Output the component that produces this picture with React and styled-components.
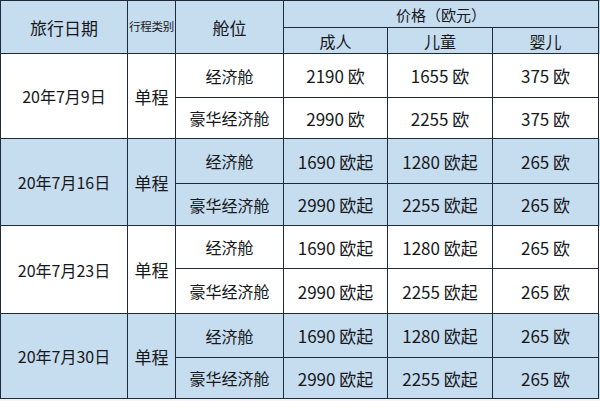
import React from 'react';
import styled, { createGlobalStyle } from 'styled-components';

const GlobalStyle = createGlobalStyle`
  html, body {
    margin: 0;
    padding: 0;
    background: #f4f5f6;
    overflow: hidden;
  }
  body {
    font-family: "Noto Sans CJK SC", "Noto Sans", sans-serif;
    color: #16181b;
  }
`;

const Table = styled.table`
  border-collapse: collapse;
  table-layout: fixed;
  width: 600px;
  border-top: 1px solid #9aa4ae;
  border-left: 1px solid #9aa4ae;
`;

const Cell = styled.td`
  border: 1.5px solid #1f2b39;
  background: ${(p) => (p.$shade ? '#c6dcef' : '#ffffff')};
  text-align: center;
  vertical-align: middle;
  padding: 0;
  font-size: ${(p) => p.$size || 16}px;
  font-weight: 400;
  line-height: 1;
  white-space: nowrap;
  overflow: hidden;
  letter-spacing: ${(p) => (p.$tight ? '-0.3px' : '0')};
`;

const Edge = styled.td`
  border: none;
  border-left: 1.5px solid #1f2b39;
  background: ${(p) => (p.$shade ? '#c6dcef' : '#ffffff')};
  padding: 0;
`;

const Row = styled.tr`
  height: ${(p) => p.$h}px;
`;

const groups = [
  {
    date: '20年7月9日',
    shade: false,
    rows: [
      ['经济舱', '2190 欧', '1655 欧', '375 欧'],
      ['豪华经济舱', '2990 欧', '2255 欧', '375 欧'],
    ],
    h: [44, 41],
  },
  {
    date: '20年7月16日',
    shade: true,
    rows: [
      ['经济舱', '1690 欧起', '1280 欧起', '265 欧'],
      ['豪华经济舱', '2990 欧起', '2255 欧起', '265 欧'],
    ],
    h: [45, 42],
  },
  {
    date: '20年7月23日',
    shade: false,
    rows: [
      ['经济舱', '1690 欧起', '1280 欧起', '265 欧'],
      ['豪华经济舱', '2990 欧起', '2255 欧起', '265 欧'],
    ],
    h: [43, 45],
  },
  {
    date: '20年7月30日',
    shade: true,
    rows: [
      ['经济舱', '1690 欧起', '1280 欧起', '265 欧'],
      ['豪华经济舱', '2990 欧起', '2255 欧起', '265 欧'],
    ],
    h: [44, 41],
  },
];

const App = () => {
  return (
    <>
      <GlobalStyle />
      <Table>
        <colgroup>
          <col style={{ width: 127 }} />
          <col style={{ width: 48 }} />
          <col style={{ width: 108 }} />
          <col style={{ width: 104 }} />
          <col style={{ width: 105 }} />
          <col style={{ width: 106 }} />
          <col style={{ width: 2 }} />
        </colgroup>
        <tbody>
          <Row $h={27}>
            <Cell $shade rowSpan={2} $size={17}>旅行日期</Cell>
            <Cell $shade rowSpan={2} $size={11.5} $tight>行程类别</Cell>
            <Cell $shade rowSpan={2} $size={17}>舱位</Cell>
            <Cell $shade colSpan={3} $size={15}>价格（欧元）</Cell>
            <Edge $shade rowSpan={2} />
          </Row>
          <Row $h={26}>
            <Cell $shade $size={16}>成人</Cell>
            <Cell $shade $size={16}>儿童</Cell>
            <Cell $shade $size={16}>婴儿</Cell>
          </Row>
          {groups.map((g) =>
            g.rows.map((r, i) => (
              <Row key={g.date + i} $h={g.h[i]}>
                {i === 0 && (
                  <>
                    <Cell $shade={g.shade} rowSpan={2}>{g.date}</Cell>
                    <Cell $shade={g.shade} rowSpan={2} $size={17}>单程</Cell>
                  </>
                )}
                {r.map((v, j) => (
                  <Cell key={j} $shade={g.shade} $size={j === 0 ? 16 : 17}>{v}</Cell>
                ))}
                <Edge $shade={g.shade} />
              </Row>
            ))
          )}
        </tbody>
      </Table>
    </>
  );
};

export default App;
